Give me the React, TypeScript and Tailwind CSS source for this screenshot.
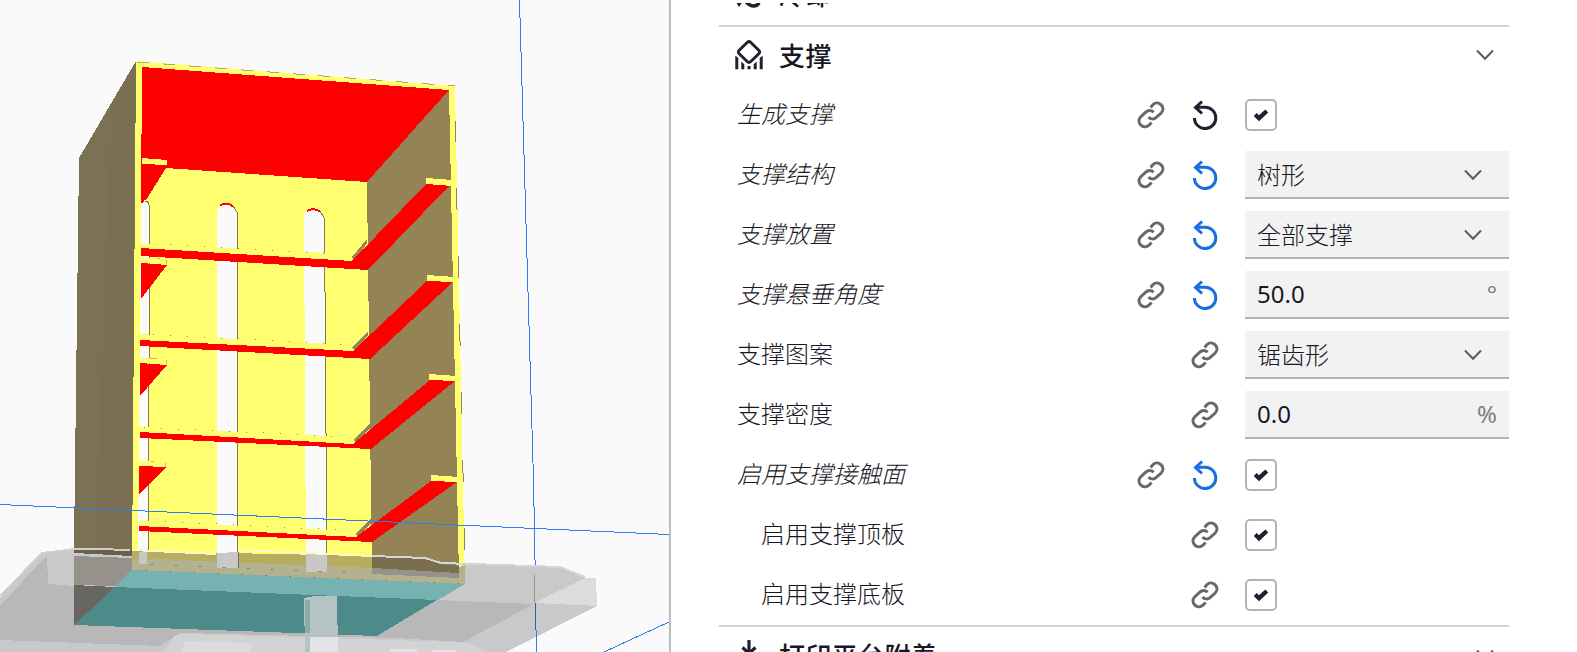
import React from "react";

const S = "#ffff70";
const R = "#ff0000";
const W = "#fafafa";
const D = "#948354";

function Model() {
  return (
    <svg width="669" height="652" viewBox="0 0 669 652" shapeRendering="crispEdges">
      <rect width="669" height="652" fill={W} />
      <path d="M519.500 0 L533.500 480 L535.300 575" fill="none" stroke="#2f7df0" />
      <path d="M669 622 L604 652" fill="none" stroke="#2f7df0" />
      {/* outer left side */}
      <path d="M136 61 L79 158 L73 624 L133 570Z" fill="#7a6f50" />
      <path d="M112 103 L95 547 L74 547 L79 158Z" fill="#7b7253" />
      {/* front frame */}
      <path d="M136 61 L455 86 L465 583 L132 570Z" fill={S} />
      <path d="M137 62 L455 86" stroke="#b2a66a" strokeDasharray="12 14" />
      <path d="M455 120 L465 560" stroke="#948354" strokeDasharray="22 46" />
      {/* inner right wall */}
      <path d="M449 90 L367 182 L372 578 L459 578Z" fill={D} />
      {/* ceiling */}
      <path d="M142 67 L449 90 L367 182 L166 168 L146 200 L141 204Z" fill={R} />
      <path d="M142 158 L167 160 V165 L142 164Z" fill={S} />
      {/* wall slots */}
      <path d="M141 204 Q145 196 149 204 L148 562 H138Z" fill={W} />
      <path d="M145 201 Q149 201 149.500 208 L148.500 562" fill="none" stroke="#84784c" />
      <path d="M217 570 V216 Q217 204 227 204 Q237 204 237 217 V570Z" fill={W} />
      <path d="M220 205.500 Q227 201 234 207" fill="none" stroke={R} strokeWidth="2" />
      <path d="M233 206 L237.500 213 V570" fill="none" stroke="#84784c" />
      <path d="M304 216 Q304 210 313 210 Q324 210 324 221 L327 572 H306Z" fill={W} />
      <path d="M307 211 Q314 207 321 212" fill="none" stroke={R} strokeWidth="2" />
      <path d="M320 211 L324.500 219 L327 572" fill="none" stroke="#84784c" />
      {/* shelves: front edge, underside, side strip */}
      <path d="M140 244 L350 254 L367 239 L369 269 L140 254Z" fill={S} />
      <path d="M352 257 L367 239 V243 L355 261Z" fill={D} />
      <path d="M141 248 L352 261 L426 184 L450 185 L368 270 L141 256Z" fill={R} />
      <path d="M426 178 L452 180 V186 L426 184Z" fill={S} />

      <path d="M139 334 L350 345 L368 331 L370 358 L139 345Z" fill={S} />
      <path d="M352 348 L368 331 V335 L356 351Z" fill={D} />
      <path d="M140 340 L353 351 L427 281 L453 282 L370 359 L140 346Z" fill={R} />
      <path d="M427 275 L455 277 V282 L427 281Z" fill={S} />

      <path d="M139 427 L351 437 L370 424 L371 448 L139 437Z" fill={S} />
      <path d="M353 440 L370 424 V428 L357 443Z" fill={D} />
      <path d="M140 432 L353 444 L430 380 L455 381 L371 449 L140 438Z" fill={R} />
      <path d="M429 374 L457 376 V381 L429 380Z" fill={S} />

      <path d="M139 521 L352 531 L371 519 L372 541 L139 531Z" fill={S} />
      <path d="M355 534 L371 519 V523 L359 537Z" fill={D} />
      <path d="M139 526 L356 537 L431 481 L457 482 L372 542 L139 531Z" fill={R} />
      <path d="M431 475 L459 477 V482 L431 481Z" fill={S} />
      {/* left brackets */}
      <path d="M141 164 L166 167 L142 204Z M141 263 L167 265 L141 299Z M140 363 L167 365 L140 396Z M139 466 L166 467 L139 495Z" fill={R} />
      <path d="M141 258 L167 259 V264 L141 263Z M140 358 L167 359 V364 L140 363Z M139 461 L166 462 V467 L139 466Z" fill={S} />
      <path d="M157 258.500 H160 M166.500 260 V264 M150 358.500 H157 M166.500 360 V364 M151 461.500 H154 M165.500 463 V467" fill="none" stroke="#c8b65c" />
      <path d="M170 244.500 L340 254.500 M153 334.500 L345 344.500 M144 427.500 L340 436.500 M165 521.500 L350 530.500" fill="none" stroke="#948354" strokeDasharray="1 16" />
      <path d="M0 504.500 L669 534.500" stroke="#2f7df0" />
      {/* teal underside */}
      <path d="M132 570 L465 584 L377 636 L74 625Z" fill="#75b2b1" />
      <path d="M115 587 L437 600 L377 636 L74 625Z" fill="#4d8b8a" />
      {/* translucent build plate */}
      <path d="M0 598 L42 552 L85 548 L132 550 V570 L74 625 L377 636 L465 584 L462 563 L560 567 L585 578 H596 L597 606 L506 652 H0Z" fill="#c9c9c9" />
      <path d="M0 606 L47 555 L48 584 L74 586 V625 L377 636 L437 600 L534 604 L463 642 L395 638 L180 633 L160 646 L0 640Z" fill="#b8b8b8" />
      <path d="M74 548 L132 550 V556 L74 553Z" fill="#696149" />
      <path d="M74 556 L132 558 V570 L115 586 L74 585Z" fill="#96928b" />
      <path d="M74 585 L115 587 L74 625Z" fill="#686661" />
      <path d="M132 551 L372 556 V568 L132 558Z" fill="#b8ac61" />
      <path d="M372 556 L425 559 L440 564 L459 566 V574 L372 568Z" fill="#796f4f" />
      <path d="M132 558 L372 568 V573 L459 577 V567 L465 565 V584 L132 570Z" fill="#b3b18e" />
      <path d="M372 568 L459 573 V578 L372 574Z" fill="#989189" />
      <path d="M139 552 H147 V564 H139Z M217 553 L238 552 V568 H217Z M306 554 H327 V572 H306Z" fill="#c8c8c9" />
      <path d="M238.500 552 V568" stroke="#706853" />
      <path d="M145 570.500 L460 583.500" stroke="#827d63" strokeDasharray="2 22" />
      <path d="M150 564.500 L360 573.500" stroke="#949173" strokeDasharray="4 20" />
      <path d="M0 596 L42 553 L80 548.500 L130 550" fill="none" stroke="#cfcfcf" strokeWidth="2" />
      <path d="M372 556 L425 558 L441 563 L560 567 L585 577" fill="none" stroke="#d5d5d5" strokeWidth="2" />
      <path d="M132 550 L216 554 M238 550 L372 556" stroke="#fafac6" strokeWidth="2" />
      <path d="M585 578 H596 L597 606 L534 603Z" fill="#dbdddc" />
      <path d="M534.500 575 V603" stroke="#96978f" />
      <path d="M535.500 603 V630" stroke="#215fc0" />
      <path d="M536.500 630 V652" stroke="#2f7df0" />
      {/* foreground platform */}
      <path d="M164 652 L173 637 Q177 633 188 634 L460 642 Q474 643 485 652Z" fill="#d2d3d3" />
      <path d="M184 641 L252 643 L250 652 H182Z" fill="#d9dcdb" />
      <path d="M304 598 L314 596 H337 L338 652 H305Z" fill="#b5c3c3" />
      <path d="M305 600 H310 V633 H305Z" fill="#86acab" />
      <path d="M310 637 H338 V652 H310Z M390 649 H417 V652 H390Z M431 650 H457 V652 H431Z" fill="#e3e4e9" />
    </svg>
  );
}

const LinkIcon = () => (
  <svg width="30" height="30" viewBox="0 0 30 30" fill="none" stroke="#686868" strokeWidth="3">
    <path d="M14.600 7.400 L17 4.600 C22.500-.4 30.500 7.500 25.200 13 L20 17.700 C17.500 19.800 14.200 19 12.600 17" />
    <path d="M17.600 12.300 C15.200 9.800 12 10 9.500 12.300 L4.600 17 C-.4 22.500 7.500 30.300 13 25.200 L15.600 22.400" />
  </svg>
);

const ResetIcon = ({ dark }: { dark?: boolean }) => (
  <svg width="26" height="30" viewBox="0 0 26 30" fill="none" stroke={dark ? "#231f30" : "#196ee0"} strokeWidth="3">
    <path d="M2.400 18 A10.700 10.700 0 1 0 13 7.200 H4" />
    <path d="M10 1.500 L3.500 7.500 L10 13.500" />
  </svg>
);

const Chevron = () => (
  <svg width="18" height="12" viewBox="0 0 18 12" fill="none" stroke="#5c5c5c" strokeWidth="2">
    <path d="M1 1.500 L9 9.700 L17 1.500" />
  </svg>
);

const SupportIcon = () => (
  <svg className="-mt-[3px]" width="28" height="30" viewBox="0 0 28 30" fill="none" stroke="#231f30">
    <path strokeWidth="2.900" d="M12.400 2.300 Q14 .9 15.600 2.300 L24 10.400 Q25.300 12 24 13.600 L15.600 21.700 Q14 23.100 12.400 21.700 L4 13.600 Q2.700 12 4 10.400Z" />
    <path fill="#231f30" stroke="none" d="M.3 15.500 L3.300 18 V29.300 H.3Z M6.300 21.500 L9.300 24.300 V29.300 H6.300Z M12.500 26 H15.500 V29.300 H12.500Z M18.700 24.300 L21.700 21.500 V29.300 H18.700Z M24.700 18 L27.700 15.500 V29.300 H24.700Z" />
  </svg>
);

const AdhesionIcon = () => (
  <svg className="-mt-[3px]" width="28" height="30" viewBox="0 0 28 30" fill="none" stroke="#231f30" strokeWidth="3.200">
    <path d="M14 0 V13 M7.500 7.500 L14 13.500 L20.500 7.500 M1.500 16 V28 H26.500 V16" />
  </svg>
);

const FanIcon = () => (
  <svg width="28" height="30" viewBox="0 0 28 30" fill="#231f30">
    <path d="M1 22 H7.500 L4 27Z" />
    <path d="M10.500 21 Q14 26 19 26 Q24 25.500 24 21" fill="none" stroke="#231f30" strokeWidth="3.500" />
  </svg>
);

function Check() {
  return (
    <div className="flex h-8 w-8 items-center justify-center rounded-[5px] border-2 border-[#b3b3b3] bg-white">
      <svg width="16" height="14" viewBox="0 0 16 14" fill="none" stroke="#231f30" strokeWidth="4.300">
        <path d="M2.200 6.500 L6 10.200 L13.800 3" />
      </svg>
    </div>
  );
}

type Setting = {
  label: string;
  kind: "check" | "select" | "input";
  value?: string;
  unit?: string;
  changed?: boolean;
  dark?: boolean;
  child?: boolean;
};

const settings: Setting[] = [
  { label: "生成支撑", kind: "check", changed: true, dark: true },
  { label: "支撑结构", kind: "select", value: "树形", changed: true },
  { label: "支撑放置", kind: "select", value: "全部支撑", changed: true },
  { label: "支撑悬垂角度", kind: "input", value: "50.0", unit: "°", changed: true },
  { label: "支撑图案", kind: "select", value: "锯齿形" },
  { label: "支撑密度", kind: "input", value: "0.0", unit: "%" },
  { label: "启用支撑接触面", kind: "check", changed: true },
  { label: "启用支撑顶板", kind: "check", child: true },
  { label: "启用支撑底板", kind: "check", child: true },
];

function Row({ s }: { s: Setting }) {
  return (
    <div className="flex h-[60px] shrink-0 items-center">
      <span className={`flex-1 pb-1 font-['Noto_Sans_CJK_SC_Light','Noto_Sans_CJK_SC',sans-serif] font-light ${s.child ? "pl-[42px]" : "pl-[18px]"} ${s.changed ? "italic" : ""}`}>{s.label}</span>
      <div className={`flex items-center ${s.changed ? "pr-[27px]" : "pr-[25px]"}`}>
        <LinkIcon />
        {s.changed && (
          <div className="ml-[26px]">
            <ResetIcon dark={s.dark} />
          </div>
        )}
      </div>
      <div className="w-[264px]">
        {s.kind === "check" ? (
          <Check />
        ) : (
          <div className="flex h-12 items-center justify-between border-b-2 border-[#b3b3b3] bg-[#f2f2f2] pl-3">
            {s.kind === "select" ? (
              <>
                <span className="font-['Noto_Sans_CJK_SC_Light','Noto_Sans_CJK_SC',sans-serif] font-light">{s.value}</span>
                <span className="pt-0.5 pr-[27px]"><Chevron /></span>
              </>
            ) : (
              <>
                <span>{s.value}</span>
                <span className="pr-3 text-[#788078]">{s.unit}</span>
              </>
            )}
          </div>
        )}
      </div>
    </div>
  );
}

function Header({ icon, title }: { icon: React.ReactNode; title: string }) {
  return (
    <div className="flex h-[58px] shrink-0 items-center pr-[15px] pl-4">
      {icon}
      <span className="ml-4 flex-1 text-[26px] font-medium tracking-[0.4px]">{title}</span>
      <span className="-mt-0.5"><Chevron /></span>
    </div>
  );
}

export default function App() {
  return (
    <main className="flex h-[652px] w-[1577px] overflow-hidden bg-white font-['Noto_Sans','Noto_Sans_CJK_SC',sans-serif] text-2xl leading-none text-[#191725]">
      <section className="w-[669px] shrink-0"><Model /></section>
      <section className="flex flex-1 flex-col border-l-2 border-[#b9bec0] pr-[68px] pl-12">
        <div className="mt-[3px] flex h-[22px] shrink-0 flex-col justify-start overflow-hidden">
          <div className="-mt-[37px]"><Header icon={<FanIcon />} title="冷却" /></div>
        </div>
        <div className="h-0.5 shrink-0 bg-[#d2d2d2]" />
        <Header icon={<SupportIcon />} title="支撑" />
        {settings.map((s) => <Row key={s.label} s={s} />)}
        <div className="h-0.5 shrink-0 bg-[#d2d2d2]" />
        <Header icon={<AdhesionIcon />} title="打印平台附着" />
      </section>
    </main>
  );
}
